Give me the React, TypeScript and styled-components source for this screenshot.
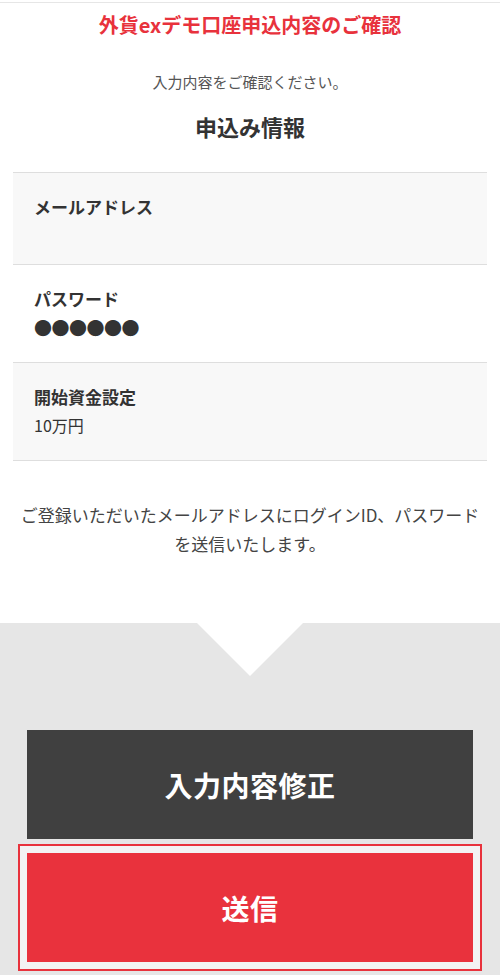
import React from "react";
import styled, { createGlobalStyle } from "styled-components";

const Global = createGlobalStyle`
  html, body { margin: 0; padding: 0; background: #fff; }
  body {
    font-family: "Noto Sans CJK JP", "Noto Sans", sans-serif;
    color: #333;
    -webkit-font-smoothing: antialiased;
  }
  * { box-sizing: border-box; }
`;

const Page = styled.div`
  width: 500px;
  min-height: 975px;
  display: flex;
  flex-direction: column;
  background: #fff;
`;

const TopLine = styled.div`
  height: 3px;
  border-bottom: 1px solid #e6e6e6;
`;

const Title = styled.h1`
  margin: 7px 0 0;
  font-size: 20px;
  line-height: 30px;
  font-weight: 700;
  color: #e8323c;
  text-align: center;
`;

const Lead = styled.p`
  margin: 30px 0 0;
  font-size: 15px;
  line-height: 24px;
  color: #555;
  text-align: center;
`;

const Heading = styled.h2`
  margin: 16px 0 0;
  font-size: 22px;
  line-height: 32px;
  font-weight: 700;
  color: #333;
  text-align: center;
`;

const Table = styled.dl`
  margin: 30px 13px 0;
  border-top: 1px solid #dedede;
`;

const Row = styled.div<{ $shaded?: boolean }>`
  padding: 20px 21px 21px;
  background: ${(p) => (p.$shaded ? "#f8f8f8" : "#fff")};
  border-bottom: 1px solid #dedede;
`;

const Label = styled.dt`
  margin: 0;
  font-size: 17px;
  line-height: 28px;
  font-weight: 700;
  color: #333;
`;

const Value = styled.dd<{ $masked?: boolean }>`
  margin: 0;
  min-height: 22px;
  font-size: ${(p) => (p.$masked ? "18px" : "16px")};
  line-height: 28px;
  color: #333;
  letter-spacing: ${(p) => (p.$masked ? "-0.5px" : "0")};
`;

const Notice = styled.p`
  margin: 39px 0 0;
  padding: 0 14px;
  font-size: 17px;
  line-height: 29px;
  color: #444;
  text-align: center;
`;

const Actions = styled.div`
  position: relative;
  margin-top: 65px;
  flex: 1;
  background: #e6e6e6;
  padding: 107px 27px 14px;
  display: flex;
  flex-direction: column;
  gap: 14px;

  &::before {
    content: "";
    position: absolute;
    top: 0;
    left: 50%;
    transform: translateX(-50%);
    border-left: 53px solid transparent;
    border-right: 53px solid transparent;
    border-top: 53px solid #fff;
  }
`;

const Button = styled.button<{ $variant: "dark" | "red"; $focused?: boolean }>`
  height: 109px;
  width: 100%;
  border: none;
  margin: 0;
  font-family: inherit;
  font-size: 28px;
  font-weight: 700;
  color: #fff;
  letter-spacing: 0.5px;
  background: ${(p) => (p.$variant === "red" ? "#e9323d" : "#404040")};
  box-shadow: ${(p) =>
    p.$focused ? "0 0 0 7px #f3f3f3, 0 0 0 9px #e8323c" : "none"};
  cursor: pointer;
`;

const rows = [
  { label: "メールアドレス", value: "", shaded: true },
  { label: "パスワード", value: "●●●●●●", shaded: false, masked: true },
  { label: "開始資金設定", value: "10万円", shaded: true },
];

export default function App() {
  return (
    <>
      <Global />
      <Page>
        <TopLine />
        <Title>外貨exデモ口座申込内容のご確認</Title>
        <Lead>入力内容をご確認ください。</Lead>
        <Heading>申込み情報</Heading>
        <Table>
          {rows.map((r) => (
            <Row key={r.label} $shaded={r.shaded}>
              <Label>{r.label}</Label>
              <Value $masked={r.masked}>{r.value}</Value>
            </Row>
          ))}
        </Table>
        <Notice>
          ご登録いただいたメールアドレスにログインID、パスワードを送信いたします。
        </Notice>
        <Actions>
          <Button $variant="dark">入力内容修正</Button>
          <Button $variant="red" $focused>
            送信
          </Button>
        </Actions>
      </Page>
    </>
  );
}
